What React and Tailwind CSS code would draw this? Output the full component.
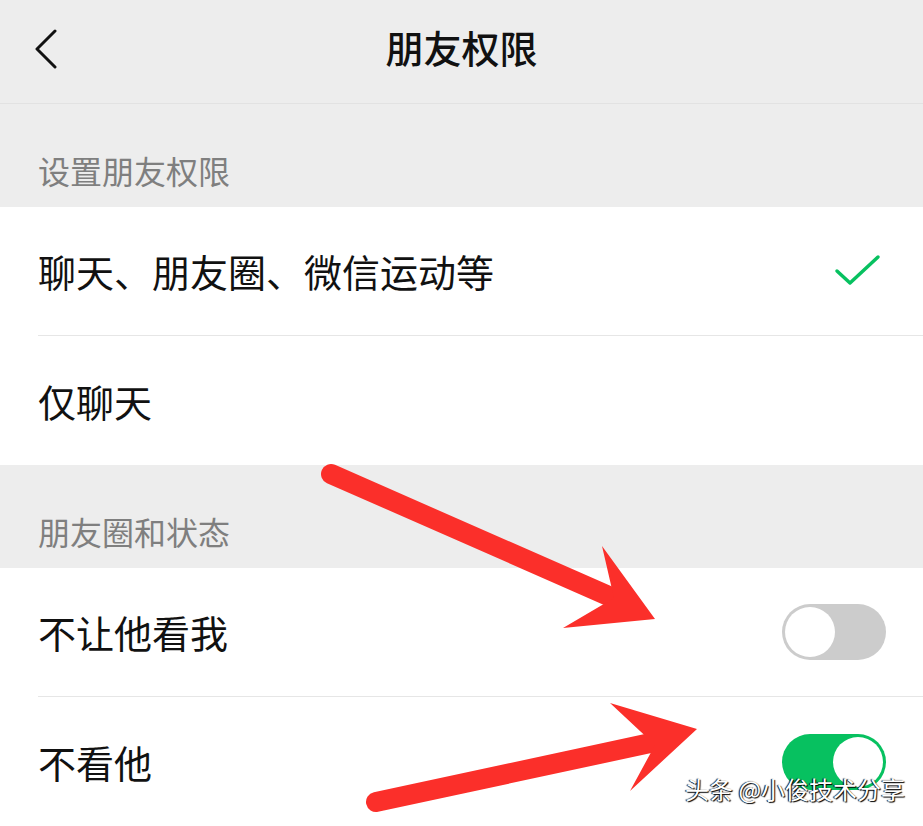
const font = {
  fontFamily: '"Noto Sans CJK SC", "Noto Sans", sans-serif',
};

const Toggle = ({ on }) => (
  <div
    className={
      on
        ? "w-[104px] h-[56px] rounded-full bg-[#07c160] p-[3px] flex justify-end"
        : "w-[104px] h-[56px] rounded-full bg-[#cccccc] p-[3px] flex justify-start"
    }
  >
    <div className="w-[50px] h-[50px] rounded-full bg-white" />
  </div>
);

const Row = ({ label, right, divider }) => (
  <div className="h-[129px] bg-white pl-[38px] flex flex-col">
    <div
      className={
        divider
          ? "flex-1 flex items-center justify-between pr-[37px] border-b border-[#e6e6e6]"
          : "flex-1 flex items-center justify-between pr-[37px]"
      }
    >
      <span className="text-[38px] text-[#111] leading-none">{label}</span>
      {right}
    </div>
  </div>
);

const Section = ({ title }) => (
  <div className="h-[103px] bg-[#ededed] pl-[38px] flex items-end pb-[21px]">
    <span className="text-[32px] text-[#7f7f7f] leading-none">{title}</span>
  </div>
);

export default function App() {
  return (
    <div className="relative w-[923px] h-[826px] overflow-hidden bg-white" style={font}>
      {/* header */}
      <div className="h-[104px] bg-[#ededed] border-b border-[#e2e2e2] relative flex items-center justify-center pb-[10px]">
        <svg className="absolute left-[33px] top-[29px]" width="26" height="40" viewBox="0 0 26 40">
          <path d="M22 2 L4 20 L22 38" fill="none" stroke="#111" strokeWidth="3" strokeLinecap="round" strokeLinejoin="round" />
        </svg>
        <span className="text-[38px] font-medium text-[#111] leading-none">朋友权限</span>
      </div>

      <Section title="设置朋友权限" />
      <Row
        label="聊天、朋友圈、微信运动等"
        divider
        right={
          <svg width="48" height="34" viewBox="0 0 48 34" className="mr-[4px]">
            <path d="M3 17 L16 29 L44 3" fill="none" stroke="#07c160" strokeWidth="3.5" strokeLinecap="round" strokeLinejoin="round" />
          </svg>
        }
      />
      <Row label="仅聊天" />
      <Section title="朋友圈和状态" />
      <Row label="不让他看我" divider right={<Toggle on={false} />} />
      <Row label="不看他" right={<Toggle on />} />

      {/* red annotation arrows */}
      <svg className="absolute left-0 top-0 pointer-events-none" width="923" height="826" viewBox="0 0 923 826">
        <line x1="331" y1="474" x2="620" y2="601" stroke="#fb2f2a" strokeWidth="20" strokeLinecap="round" />
        <polygon points="655,619 602,546 614,598 563,628" fill="#fb2f2a" />
        <line x1="376" y1="802" x2="655" y2="742" stroke="#fb2f2a" strokeWidth="20" strokeLinecap="round" />
        <polygon points="697,729 610,703 655,745 630,791" fill="#fb2f2a" />
      </svg>

      {/* watermark */}
      <div
        className="absolute left-[685px] top-[777px] text-[24px] text-white leading-none"
        style={{ textShadow: "1px 1px 1px #000, -1px 0 1px #000" }}
      >
        头条 @小俊技术分享
      </div>
    </div>
  );
}
